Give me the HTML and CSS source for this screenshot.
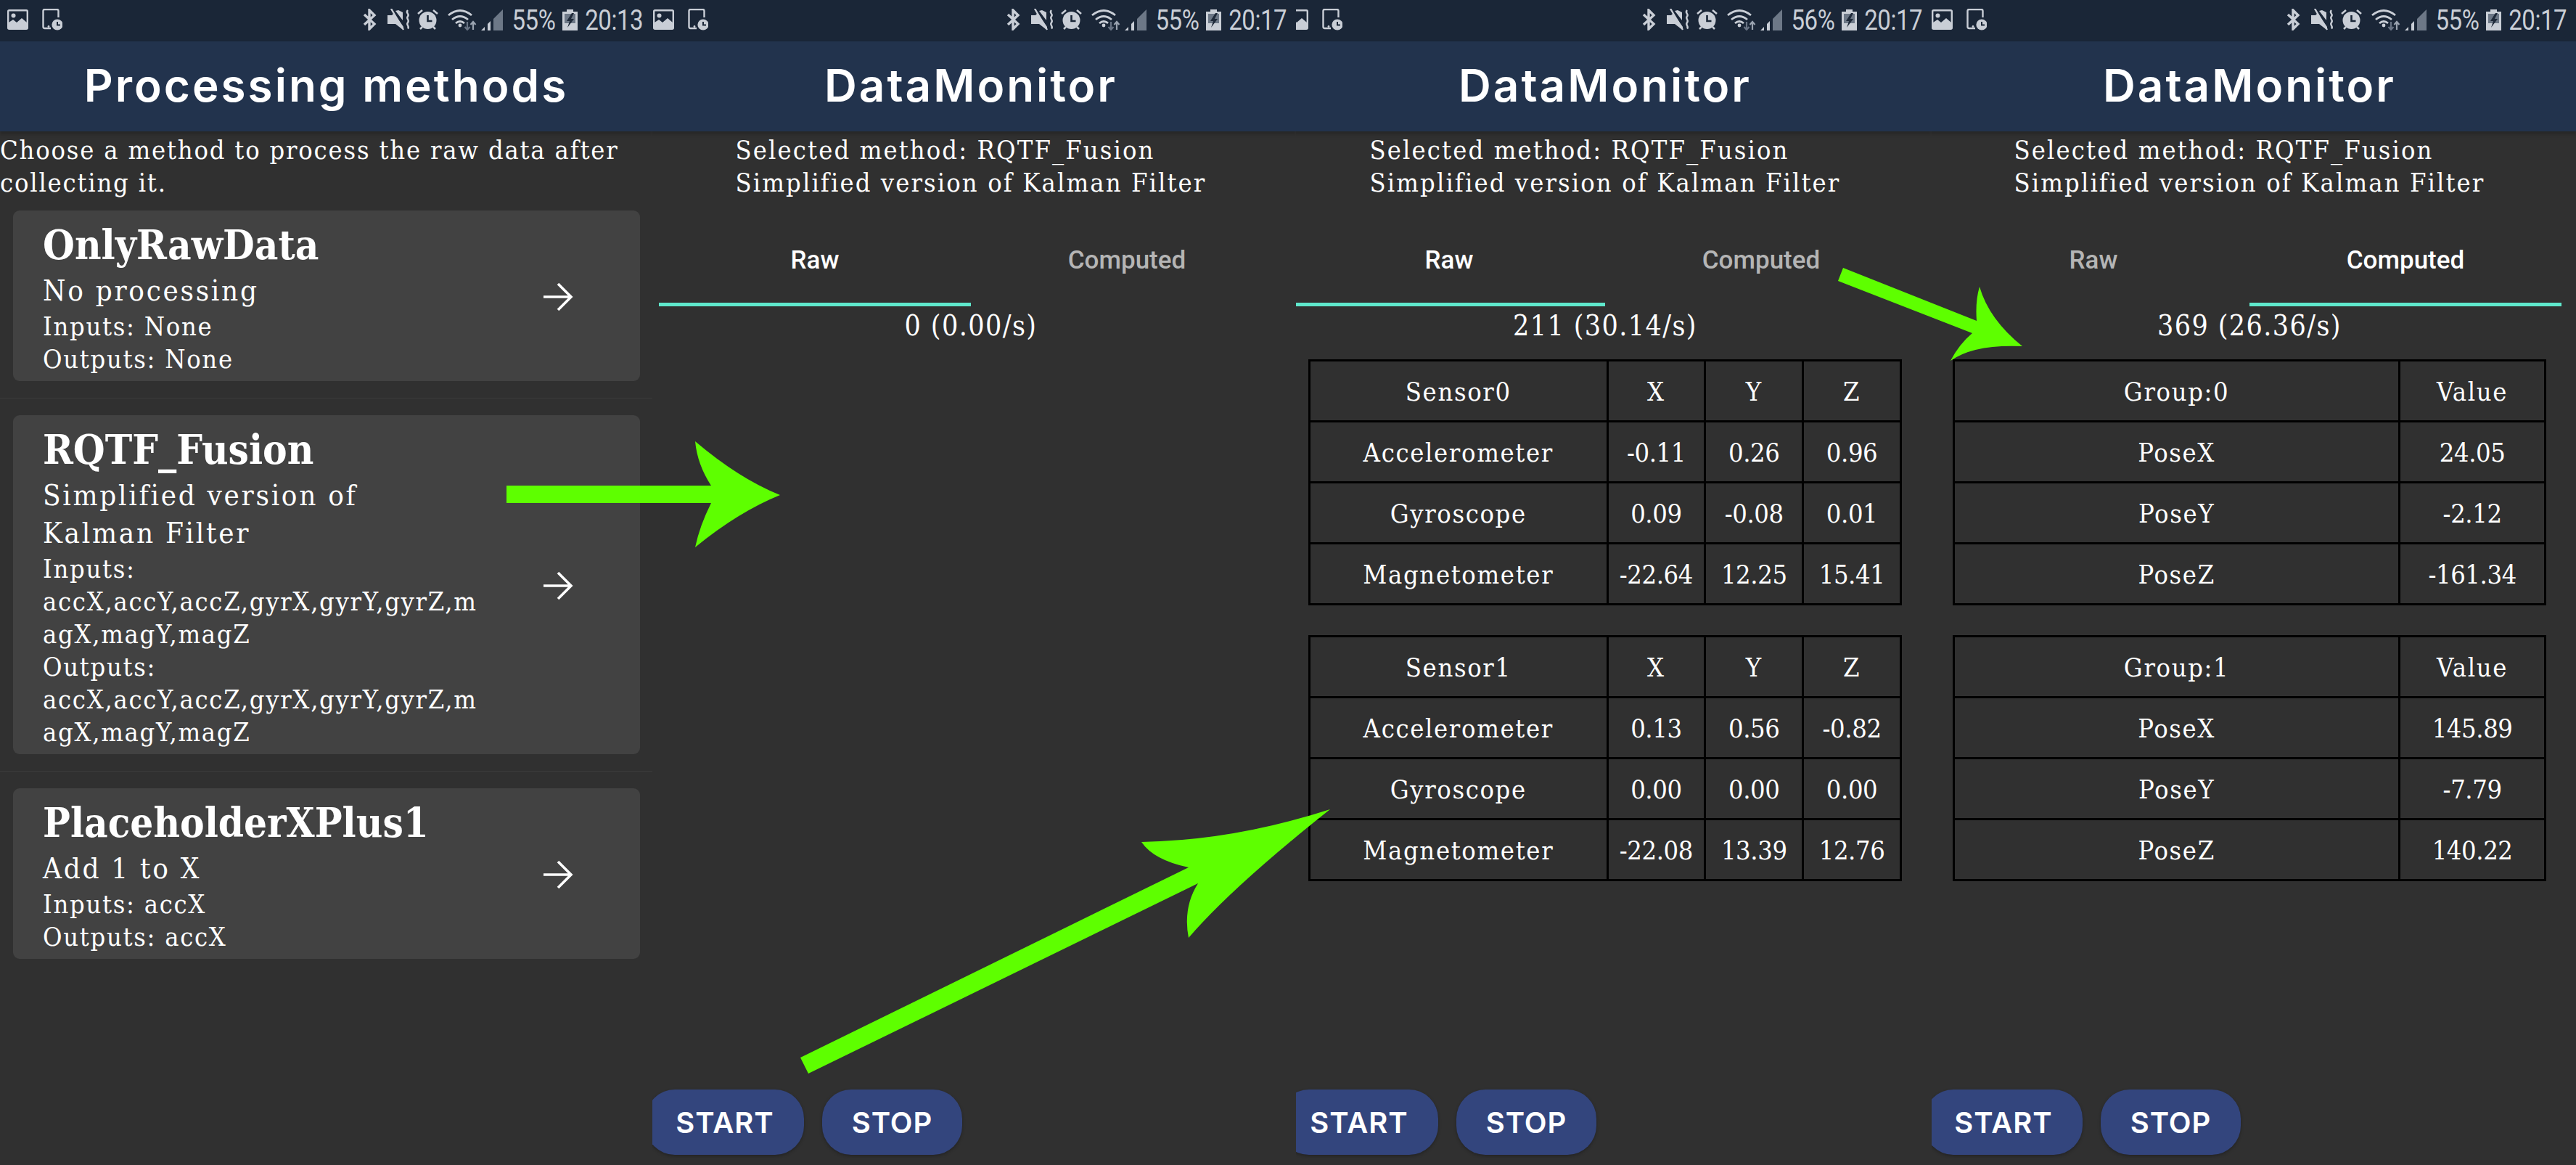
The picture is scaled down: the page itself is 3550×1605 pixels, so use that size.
FILE: index.html
```html
<!DOCTYPE html>
<html lang="en">
<head>
  <meta charset="UTF-8" />
  <title>DataMonitor screens</title>
  <link rel="stylesheet" href="styles.css">
</head>
<body>
  <svg class="defs" width="0" height="0">
    <symbol id="i-image" viewBox="0 0 29 28">
      <rect x="1.2" y="1.2" width="26.6" height="25.6" rx="1.5" fill="none" stroke="#c9ced6" stroke-width="2.4"/>
      <circle cx="8.5" cy="8.5" r="3" fill="#c9ced6"/>
      <path d="M2 24v-6l6-4 5 4 7-6 7 6v8H2z" fill="#c9ced6"/>
    </symbol>
    <symbol id="i-device" viewBox="0 0 28 30">
      <path d="M12 27H3.5q-2 0-2-2V3q0-2 2-2h17q2 0 2 2v9" fill="none" stroke="#c9ced6" stroke-width="2.4"/>
      <circle cx="9" cy="24.5" r="1.4" fill="#c9ced6"/>
      <circle cx="21" cy="22" r="7.6" fill="#c9ced6"/>
      <path d="M21 18v4.5h4" fill="none" stroke="#1a2637" stroke-width="2"/>
    </symbol>
    <symbol id="i-bt" viewBox="0 0 21 30">
      <path d="M3 8l14 13-7 7V2l7 7L3 22" fill="none" stroke="#c9ced6" stroke-width="3.4"/>
    </symbol>
    <symbol id="i-mute" viewBox="0 0 31 30">
      <path d="M0 9h6l3-3 13 19v2l-2 1-9-7H0z" fill="#c9ced6"/>
      <path d="M11 3l4-1 6 3v11z" fill="#c9ced6"/>
      <path d="M5 0l17 29" stroke="#c9ced6" stroke-width="2.4"/>
      <path d="M28 2c-4 4 3 5 0 8.500s3 5 0 8.500 3 5 0 8.500" fill="none" stroke="#c9ced6" stroke-width="2.400"/>
    </symbol>
    <symbol id="i-alarm" viewBox="0 0 29 30">
      <circle cx="14.500" cy="16" r="12" fill="#c9ced6"/>
      <path d="M14.500 9v8h6" fill="none" stroke="#1a2637" stroke-width="2.600"/>
      <path d="M1 7l6-5M28 7l-6-5M4 28l3-3M25 28l-3-3" stroke="#c9ced6" stroke-width="2.600"/>
    </symbol>
    <symbol id="i-wifi" viewBox="0 0 40 30">
      <path d="M1 9q16-13 32 0M6 15q11-9 22 0M11 20q6-5 12 0" fill="none" stroke="#c9ced6" stroke-width="2.800"/>
      <circle cx="17" cy="23" r="2.400" fill="#c9ced6"/>
      <path d="M27 18v11M23.500 25l3.500 4 3.500-4" fill="none" stroke="#697485" stroke-width="2.200"/>
      <path d="M35 29V18M31.500 22l3.500-4 3.500 4" fill="none" stroke="#9aa3b0" stroke-width="2.200"/>
    </symbol>
    <symbol id="i-signal" viewBox="0 0 30 30">
      <path d="M17 30V14L30 1v29z" fill="#6d7887"/>
      <path d="M0 30l5-5v5zM9 30V21l4-4v13z" fill="#c9ced6"/>
    </symbol>
    <symbol id="i-battery" viewBox="0 0 21 30">
      <path d="M6 1h9v3h6v26H0V4h6z" fill="#c9ced6"/>
      <rect x="3" y="7" width="15" height="13" fill="#6d7887"/>
      <path d="M13 6l-7 11h4l-3 9 9-12h-4l4-8z" fill="#1f2a3a"/>
    </symbol>
    <symbol id="i-go" viewBox="0 0 42 40">
      <path d="M1 20h38M21 2l18 18-18 18" fill="none" stroke="#fff" stroke-width="3.600"/>
    </symbol>
  </svg>

  <div class="shots">

    <section class="panel panel-one">
      <div class="screen">
        <div class="status">
          <svg class="ic-image"><use href="#i-image"/></svg>
          <svg class="ic-device"><use href="#i-device"/></svg>
          <div class="status-right">
            <svg class="ic-bt"><use href="#i-bt"/></svg>
            <svg class="ic-mute"><use href="#i-mute"/></svg>
            <svg class="ic-alarm"><use href="#i-alarm"/></svg>
            <svg class="ic-wifi"><use href="#i-wifi"/></svg>
            <svg class="ic-signal"><use href="#i-signal"/></svg>
            <span class="status-text pct">55%</span>
            <svg class="ic-battery"><use href="#i-battery"/></svg>
            <span class="status-text clock">20:13</span>
          </div>
        </div>
        <header class="appbar">Processing methods</header>
        <p class="intro">Choose a method to process the raw data after<br>collecting it.</p>
        <div class="method">
          <div class="method-text">
            <h2>OnlyRawData</h2>
            <div class="sub">No processing</div>
            <div class="small">Inputs: None<br>Outputs: None</div>
          </div>
          <svg class="ic-go"><use href="#i-go"/></svg>
        </div>
        <div class="rule"></div>
        <div class="method">
          <div class="method-text">
            <h2>RQTF_Fusion</h2>
            <div class="sub">Simplified version of<br>Kalman Filter</div>
            <div class="small">Inputs:<br>accX,accY,accZ,gyrX,gyrY,gyrZ,m<br>agX,magY,magZ<br>Outputs:<br>accX,accY,accZ,gyrX,gyrY,gyrZ,m<br>agX,magY,magZ</div>
          </div>
          <svg class="ic-go"><use href="#i-go"/></svg>
        </div>
        <div class="rule"></div>
        <div class="method">
          <div class="method-text">
            <h2>PlaceholderXPlus1</h2>
            <div class="sub">Add 1 to X</div>
            <div class="small">Inputs: accX<br>Outputs: accX</div>
          </div>
          <svg class="ic-go"><use href="#i-go"/></svg>
        </div>
      </div>
    </section>

    <section class="panel panel-two">
      <div class="screen">
        <div class="status">
          <svg class="ic-image"><use href="#i-image"/></svg>
          <svg class="ic-device"><use href="#i-device"/></svg>
          <div class="status-right">
            <svg class="ic-bt"><use href="#i-bt"/></svg>
            <svg class="ic-mute"><use href="#i-mute"/></svg>
            <svg class="ic-alarm"><use href="#i-alarm"/></svg>
            <svg class="ic-wifi"><use href="#i-wifi"/></svg>
            <svg class="ic-signal"><use href="#i-signal"/></svg>
            <span class="status-text pct">55%</span>
            <svg class="ic-battery"><use href="#i-battery"/></svg>
            <span class="status-text clock">20:17</span>
          </div>
        </div>
        <header class="appbar">DataMonitor</header>
        <div class="monitor">
          <p class="selected">Selected method: RQTF_Fusion<br>Simplified version of Kalman Filter</p>
          <div class="tabs">
            <div class="tab active">Raw</div>
            <div class="tab">Computed</div>
          </div>
          <div class="count">0 (0.00/s)</div>
        </div>
        <div class="actions">
          <button class="btn btn-start">START</button>
          <button class="btn btn-stop">STOP</button>
        </div>
      </div>
    </section>

    <section class="panel panel-three">
      <div class="screen">
        <div class="status">
          <svg class="ic-image"><use href="#i-image"/></svg>
          <svg class="ic-device"><use href="#i-device"/></svg>
          <div class="status-right">
            <svg class="ic-bt"><use href="#i-bt"/></svg>
            <svg class="ic-mute"><use href="#i-mute"/></svg>
            <svg class="ic-alarm"><use href="#i-alarm"/></svg>
            <svg class="ic-wifi"><use href="#i-wifi"/></svg>
            <svg class="ic-signal"><use href="#i-signal"/></svg>
            <span class="status-text pct">56%</span>
            <svg class="ic-battery"><use href="#i-battery"/></svg>
            <span class="status-text clock">20:17</span>
          </div>
        </div>
        <header class="appbar">DataMonitor</header>
        <div class="monitor">
          <p class="selected">Selected method: RQTF_Fusion<br>Simplified version of Kalman Filter</p>
          <div class="tabs">
            <div class="tab active">Raw</div>
            <div class="tab">Computed</div>
          </div>
          <div class="count">211 (30.14/s)</div>
          <table class="grid sensors">
            <tr><td>Sensor0</td><td>X</td><td>Y</td><td>Z</td></tr>
            <tr><td>Accelerometer</td><td>-0.11</td><td>0.26</td><td>0.96</td></tr>
            <tr><td>Gyroscope</td><td>0.09</td><td>-0.08</td><td>0.01</td></tr>
            <tr><td>Magnetometer</td><td>-22.64</td><td>12.25</td><td>15.41</td></tr>
          </table>
          <table class="grid sensors">
            <tr><td>Sensor1</td><td>X</td><td>Y</td><td>Z</td></tr>
            <tr><td>Accelerometer</td><td>0.13</td><td>0.56</td><td>-0.82</td></tr>
            <tr><td>Gyroscope</td><td>0.00</td><td>0.00</td><td>0.00</td></tr>
            <tr><td>Magnetometer</td><td>-22.08</td><td>13.39</td><td>12.76</td></tr>
          </table>
        </div>
        <div class="actions">
          <button class="btn btn-start">START</button>
          <button class="btn btn-stop">STOP</button>
        </div>
      </div>
    </section>

    <section class="panel panel-four">
      <div class="screen">
        <div class="status">
          <svg class="ic-image"><use href="#i-image"/></svg>
          <svg class="ic-device"><use href="#i-device"/></svg>
          <div class="status-right">
            <svg class="ic-bt"><use href="#i-bt"/></svg>
            <svg class="ic-mute"><use href="#i-mute"/></svg>
            <svg class="ic-alarm"><use href="#i-alarm"/></svg>
            <svg class="ic-wifi"><use href="#i-wifi"/></svg>
            <svg class="ic-signal"><use href="#i-signal"/></svg>
            <span class="status-text pct">55%</span>
            <svg class="ic-battery"><use href="#i-battery"/></svg>
            <span class="status-text clock">20:17</span>
          </div>
        </div>
        <header class="appbar">DataMonitor</header>
        <div class="monitor">
          <p class="selected">Selected method: RQTF_Fusion<br>Simplified version of Kalman Filter</p>
          <div class="tabs">
            <div class="tab">Raw</div>
            <div class="tab active">Computed</div>
          </div>
          <div class="count">369 (26.36/s)</div>
          <table class="grid groups">
            <tr><td>Group:0</td><td>Value</td></tr>
            <tr><td>PoseX</td><td>24.05</td></tr>
            <tr><td>PoseY</td><td>-2.12</td></tr>
            <tr><td>PoseZ</td><td>-161.34</td></tr>
          </table>
          <table class="grid groups">
            <tr><td>Group:1</td><td>Value</td></tr>
            <tr><td>PoseX</td><td>145.89</td></tr>
            <tr><td>PoseY</td><td>-7.79</td></tr>
            <tr><td>PoseZ</td><td>140.22</td></tr>
          </table>
        </div>
        <div class="actions">
          <button class="btn btn-start">START</button>
          <button class="btn btn-stop">STOP</button>
        </div>
      </div>
    </section>

  </div>

  <!-- green arrows drawn over the screenshots -->
  <svg class="marks" viewBox="0 0 3550 1605">
    <path d="M698 669H980Q961 640 958 608Q1018 659 1075 682Q1018 705 958 754Q964 725 980 693H698z"/>
    <path d="M1103 1457L1638 1195Q1590 1185 1573 1160Q1700 1158 1833 1115Q1698 1222 1638 1292Q1630 1250 1651 1217L1114 1479z"/>
    <path d="M2540 369L2724 442Q2722 415 2728 395Q2741 440 2787 477Q2720 474 2688 497Q2700 474 2718 459L2533 387z"/>
  </svg>
</body>
</html>
```

FILE: styles.css
```css
html, body { margin: 0; padding: 0; }
body { width: 3550px; height: 1605px; overflow: hidden; background: #303030; position: relative; color: #fff; font-family: "DejaVu Serif Condensed", "DejaVu Serif", serif; }
.defs { position: absolute; }

.shots { display: flex; height: 1605px; }
.panel { height: 1605px; overflow: hidden; flex: none; }
.screen { height: 1605px; display: flex; flex-direction: column; box-sizing: border-box; }

.panel-one { width: 899px; }
.panel-two { width: 887px; }
.panel-two .screen { width: 896px; margin-left: -9px; }
.panel-three { width: 876px; }
.panel-three .screen { width: 900px; margin-left: -24px; }
.panel-four { width: 888px; }
.panel-four .screen { width: 900px; margin-left: -12px; }

/* status bar */
.status { height: 57px; flex: none; box-sizing: border-box; background: #1a2637; display: flex; align-items: center; padding: 0 13px 3px 10px; }
.panel-three .status, .panel-four .status { padding-left: 12px; }
.status-right { margin-left: auto; display: flex; align-items: center; gap: 10px; }
.status-text { font-family: Roboto, sans-serif; font-size: 33px; color: #c9ced6; transform: scaleY(1.2); letter-spacing: -0.5px; }
.ic-image { width: 29px; height: 28px; margin-right: 19px; }
.ic-device { width: 28px; height: 30px; }
.ic-bt { width: 21px; height: 30px; margin-right: 4px; }
.ic-mute { width: 31px; height: 30px; }
.ic-alarm { width: 29px; height: 30px; margin-right: 3px; }
.ic-wifi { width: 40px; height: 30px; margin-right: -4px; }
.ic-signal { width: 30px; height: 30px; margin-right: 3px; }
.ic-battery { width: 21px; height: 30px; }

.appbar { height: 124px; flex: none; background: #22334d; box-shadow: 0 4px 5px #0003; display: flex; align-items: center; justify-content: center; font-family: Inter, sans-serif; font-weight: 600; font-size: 62px; letter-spacing: 3px; padding-bottom: 4px; box-sizing: border-box; position: relative; }

/* method list */
.intro { margin: 3px 0 16px; font-size: 36px; line-height: 45px; letter-spacing: 1.8px; white-space: nowrap; }
.method { margin: 0 17px 0 18px; background: #424242; border-radius: 9px; display: flex; align-items: center; padding: 10px 92px 8px 41px; }
.method-text { flex: 1; white-space: nowrap; }
.method h2 { margin: 0; font-size: 56px; line-height: 74px; font-weight: bold; }
.sub { font-size: 40px; line-height: 52px; letter-spacing: 2.7px; }
.small { font-size: 36px; line-height: 45px; margin-top: 1px; letter-spacing: 1.7px; }
.ic-go { width: 42px; height: 40px; }
.rule { height: 1px; background: #3b3b3b; margin: 23px 0; }

/* data monitor */
.monitor { display: flex; flex-direction: column; align-items: center; }
.selected { margin: 3px 0 0; font-size: 36px; line-height: 45px; letter-spacing: 2.1px; white-space: nowrap; }
.tabs { width: 860px; display: flex; margin-top: 26px; flex: none; }
.tab { flex: 1; height: 117px; border-bottom: 5px solid transparent; display: flex; align-items: center; justify-content: center; font-family: Roboto, sans-serif; font-weight: 500; font-size: 35px; color: #b5b5b5; }
.tab.active { color: #fff; border-bottom-color: #5fe8cc; }
.count { height: 54px; line-height: 54px; font-size: 39px; margin-bottom: 19px; letter-spacing: 1.4px; }

.grid { width: 818px; flex: none; border-collapse: collapse; table-layout: fixed; margin-bottom: 41px; }
.grid td { border: 3px solid #000; height: 79px; padding: 2px 0 0; text-align: center; font-size: 36px; letter-spacing: 1.65px; white-space: nowrap; }
.grid tr + tr td + td { letter-spacing: -0.4px; }
.sensors td:first-child { width: 50%; }
.groups td:first-child { width: 75%; }

.actions { margin-top: auto; padding-bottom: 14px; display: flex; gap: 25px; }
.panel-three .actions, .panel-four .actions { padding-left: 2px; }
.btn { height: 90px; border: 0; border-radius: 40px; background: #33457d; color: #fff; font-family: Inter, sans-serif; font-weight: 600; font-size: 40px; letter-spacing: 1px; padding: 0; box-shadow: 0 2px 4px #0004; }
.btn-start { width: 218px; }
.btn-stop { width: 193px; }

.marks { position: absolute; left: 0; top: 0; width: 3550px; height: 1605px; pointer-events: none; }
.marks path { fill: #5eff00; }
```
